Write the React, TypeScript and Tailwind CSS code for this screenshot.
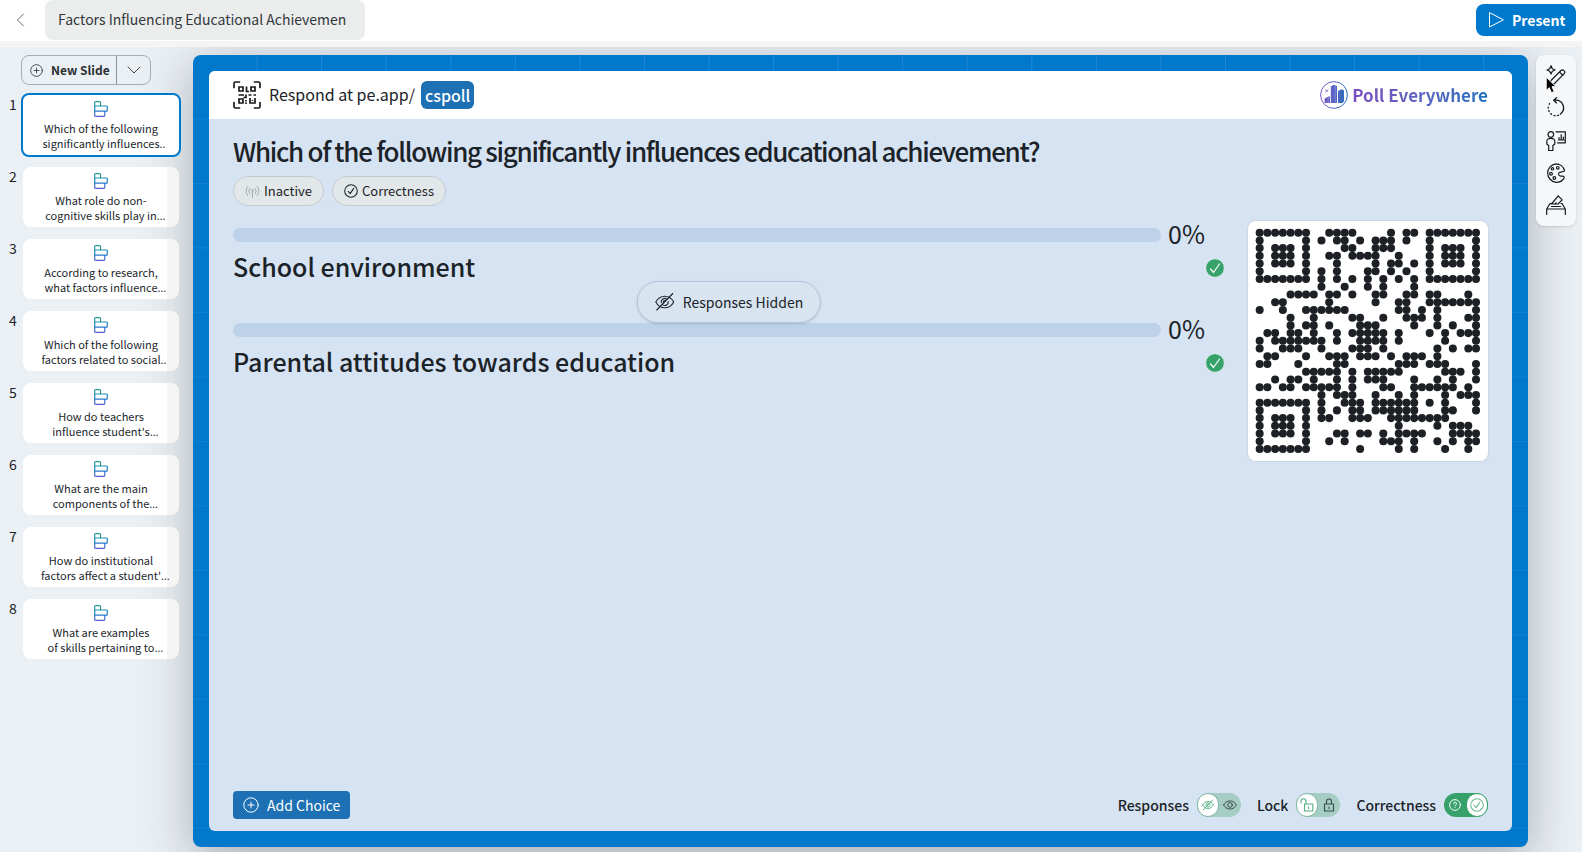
import type { ReactNode } from "react";

const QR_CELLS: string[] = [
  "0-6 9-12 17 19 20 22-28",
  "0 6 8 10 11 13 15-17 19 22 28",
  "0 2-4 6 11 12 15-17 22 24-26 28",
  "0 2-4 6 9 10 12-15 18 22 24-26 28",
  "0 2-4 6 10 15 17 18 20 22 24-26 28",
  "0 6 8 10 14 15 17 19 22 28",
  "0-6 8 10 12 14 16 18 20 22-28",
  "8 11 14 16 20",
  "4-7 9 10 12 15 16 19 20 22 23 27",
  "2 3 9 15 18 19 22-28",
  "0 3 6-11 18 19 21 23 28",
  "4 7 12 13 16 19-21 23 27 28",
  "4 6 7 9 13-15 20 23 25 28",
  "1 2 4 5 7 10 12-16 18 22 24 26-28",
  "0 2-8 10 13-16 18 24 28",
  "0 3-5 8 12-14 16 23 25 27 28",
  "1 2 6 9-11 13-15 17 19-21 23",
  "0 1 5 10 11 18-20 22-24 28",
  "6-10 12 14-18 24-26 28",
  "2 4 5 7 10 12 14-16 20 23 25 28",
  "0 1 3 4 6-10 12 16 17 20-25 27",
  "8 10-12 15 18 20 24 26-28",
  "0-6 8 11-13 15-20 22 24 28",
  "0 6 8 10 12 13 15-20 24 25 28",
  "0 2-4 6 8 9 12-14 17-24",
  "0 2-4 6 18 23 25-27",
  "0 2-4 6 10 11 13 14 16 18-21 25-28",
  "0 6 9 11 16-18 20 23 25 27 28",
  "0-6 13 18 20 24 27",
];

function expand(row: string): number[] {
  return row.split(" ").flatMap((part) => {
    const [from, to] = part.split("-").map(Number);
    if (to === undefined) return [from];
    return Array.from({ length: to - from + 1 }, (_, i) => from + i);
  });
}

type IconProps = { className?: string; box?: number; width?: number; children: ReactNode };

function Icon({ className = "size-5", box = 20, width = 1, children }: IconProps) {
  return (
    <svg
      className={className}
      viewBox={`0 0 ${box} ${box}`}
      fill="none"
      stroke="currentColor"
      strokeWidth={width}
      strokeLinecap="round"
      strokeLinejoin="round"
      aria-hidden="true"
    >
      {children}
    </svg>
  );
}

const PlusCircle = ({ className }: { className: string }) => (
  <Icon className={className} box={16}>
    <circle cx="8" cy="8" r="7.2" />
    <path d="M8 5v6M5 8h6" />
  </Icon>
);

const EyeOff = ({ className, width = 1.1 }: { className: string; width?: number }) => (
  <Icon className={className} width={width}>
    <path d="M1 10c2-3.6 5.2-5.8 9-5.8s7 2.2 9 5.8c-2 3.600-5.200 5.800-9 5.800S3 13.600 1 10Z" />
    <path d="M6.400 10.600A3.600 3.600 0 0 1 12 7.100M13.500 9.500A3.600 3.600 0 0 1 8 12.900M8.600 10.400a1.600 1.600 0 0 1 1.800-1.900" />
    <path d="M18 1.500 2 18" />
  </Icon>
);

const CheckCircle = ({ className, width = 1 }: { className: string; width?: number }) => (
  <Icon className={className} box={16} width={width}>
    <circle cx="8" cy="8" r="7.200" />
    <path d="m4.800 8.500 2.200 2.500L11.200 5" />
  </Icon>
);

function PollIcon() {
  return (
    <svg className="h-4 w-[14px]" viewBox="0 0 14 16" fill="none" strokeWidth="1.200" strokeLinejoin="round" aria-hidden="true">
      <defs>
        <linearGradient id="poll-stroke" x1="0" y1="0" x2="0" y2="16" gradientUnits="userSpaceOnUse">
          <stop offset="0" stopColor="#35a58c" />
          <stop offset="0.450" stopColor="#0f86c4" />
          <stop offset="1" stopColor="#5a5fd0" />
        </linearGradient>
      </defs>
      <path
        stroke="url(#poll-stroke)"
        d="M.7 14.500V1.400Q.7.700 1.400.7h4.400q.7 0 .7.700V5H12.600q.7 0 .7.700v3.800q0 .7-.7.700H.7M.7 5h5.800M10.800 10.200v4.100q0 1-1 1H1.400q-.7 0-.7-.8"
      />
    </svg>
  );
}

function ScanIcon() {
  return (
    <svg className="size-7 text-[#17191c]" viewBox="0 0 28 28" fill="none" stroke="currentColor" strokeWidth="1.700" aria-hidden="true">
      <path d="M1 6.500V2.500Q1 1 2.500 1H6.500M21.500 1h4Q27 1 27 2.500v4M27 21.500v4q0 1.500-1.500 1.500h-4M6.500 27h-4Q1 27 1 25.500v-4" strokeLinecap="round" />
      <path d="M6 6h4v4H6zM18 6h4v4h-4zM6 18h4v4H6z" />
      <path d="M13.500 5.500v5H16M5.500 14H11M13 13.500v3h-2.500M15.500 14h3M20.500 14H23M17 17v5h5v-5M19.500 19v1M13 19v1.500M13 21.500V23" />
    </svg>
  );
}

function BrandMark() {
  return (
    <svg className="size-7" viewBox="0 0 28 28" fill="none" aria-hidden="true">
      <defs>
        <linearGradient id="brand" x1="0" y1="0" x2="28" y2="0" gradientUnits="userSpaceOnUse">
          <stop offset="0" stopColor="#8058c4" />
          <stop offset="0.600" stopColor="#5266c4" />
          <stop offset="1" stopColor="#1d70b8" />
        </linearGradient>
      </defs>
      <circle cx="14" cy="14" r="13.400" stroke="url(#brand)" />
      <path
        fill="url(#brand)"
        d="M4.500 17.500 9 15.200l1 .6V22H4.500zM10.800 5.500 13.800 3.800l3.200 1.200V22h-6.200zM18 10l3.500-1.800 2.500 1v11L22.500 22H18z"
      />
      <path d="m8.300 15.500V22M15.300 5V21.500" stroke="#fff" strokeOpacity=".35" strokeWidth=".7" />
      <path d="M5 8.500l2.500 2M5.500 11.200l3-2.800" stroke="#7b52c0" strokeWidth=".8" />
    </svg>
  );
}

const slides: { lines: [string, string]; tail: string }[] = [
  { lines: ["Which of the following", "significantly influences"], tail: ".." },
  { lines: ["What role do non-", "cognitive skills play in"], tail: "…" },
  { lines: ["According to research,", "what factors influence"], tail: "…" },
  { lines: ["Which of the following", "factors related to social"], tail: ".." },
  { lines: ["How do teachers", "influence student's"], tail: "…" },
  { lines: ["What are the main", "components of the"], tail: "…" },
  { lines: ["How do institutional", "factors affect a student'"], tail: "…" },
  { lines: ["What are examples", "of skills pertaining to"], tail: "…" },
];

function SlideList() {
  return (
    <ol className="flex flex-col gap-2">
      {slides.map((slide, i) => (
        <li key={i} className="flex">
          <span className="w-[21px] shrink-0 pl-[9px] pt-px text-[14px] leading-5">{i + 1}</span>
          <button
            type="button"
            aria-current={i === 0}
            className={
              i === 0
                ? "flex h-16 w-40 flex-col items-center rounded-lg border-2 border-[#0078cc] bg-white pt-[6px]"
                : "flex h-16 w-40 flex-col items-center rounded-[10px] border-2 border-transparent bg-[linear-gradient(90deg,#fff_92%,#f5f5f5_92%)] bg-clip-padding pt-[6px]"
            }
          >
            <PollIcon />
            <span className="mt-1 text-[11px] leading-[15px] whitespace-nowrap text-[#22272c]">
              <span className="block">{slide.lines[0]}</span>
              <span className="block">
                {slide.lines[1]}
                <span className="inline-flex w-0 font-['Noto_Sans',sans-serif]">{slide.tail}</span>
              </span>
            </span>
          </button>
        </li>
      ))}
    </ol>
  );
}

function QrCode() {
  return (
    <svg
      className="size-60 shrink-0 rounded-lg bg-white shadow-[0_0_1px_1px_#c9d6e4]"
      viewBox="-1.010 -1.010 31.060 31.060"
      role="img"
      aria-label="QR code for pe.app/cspoll"
    >
      <g fill="#1d2024">
        {QR_CELLS.map((row, y) => expand(row).map((x) => <circle key={`${x}-${y}`} cx={x + 0.5} cy={y + 0.5} r="0.520" />))}
      </g>
    </svg>
  );
}

function Choice({ label }: { label: string }) {
  return (
    <li className="pb-[31px]">
      <div className="flex h-7 items-center">
        <div className="h-[14px] flex-1 rounded-full bg-[#bdd1e9]" />
        <span className="w-16 pb-1 pl-[7px] text-[25px] leading-7">0%</span>
      </div>
      <div className="flex h-9 items-center justify-between">
        <span className="pb-[2px] text-[25px] leading-9 font-medium">{label}</span>
        <svg className="mt-[2px] size-5" viewBox="0 0 20 20" fill="none" role="img" aria-label="Correct">
          <circle cx="10" cy="10" r="9.300" fill="#36a269" stroke="#e6f2ee" strokeWidth=".8" />
          <path d="m5.500 10.800 3 3.700 6-8.500" stroke="#fff" strokeWidth="1.200" strokeLinecap="round" strokeLinejoin="round" />
        </svg>
      </div>
    </li>
  );
}

type ToggleProps = { label: string; checked?: boolean; off: ReactNode; on: ReactNode };

function Toggle({ label, checked = false, off, on }: ToggleProps) {
  return (
    <label className="flex items-center gap-2 text-[14px] leading-6 font-medium">
      {label}
      <input type="checkbox" role="switch" defaultChecked={checked} className="peer sr-only" />
      <span
        className={
          checked
            ? "flex h-6 w-11 items-center justify-between rounded-full bg-[#36a269] text-white"
            : "flex h-6 w-11 items-center justify-between rounded-full bg-[#a5cdc3] text-[#3b4a4c]"
        }
      >
        <span
          className={
            checked
              ? "flex size-6 items-center justify-center"
              : "flex size-6 items-center justify-center rounded-full border border-[#7fb5a3] bg-white text-[#4fae80]"
          }
        >
          {off}
        </span>
        <span
          className={
            checked
              ? "flex size-6 items-center justify-center rounded-full border border-[#36a269] bg-white text-[#6cba94]"
              : "flex size-6 items-center justify-center"
          }
        >
          {on}
        </span>
      </span>
    </label>
  );
}

function SideTools() {
  const button = "flex h-8 w-full items-center justify-center";
  return (
    <aside className="relative ml-2 flex w-10 shrink-0 flex-col items-center self-start rounded-lg bg-[#f5f7f9] pt-1 pb-[5px] text-[#15181b] shadow-sm">
      <button type="button" aria-label="Edit with AI" className={button}>
        <Icon width={1.2}>
          <path d="M5 .8 6.300 3.700 9 5 6.300 6.300 5 9 3.700 6.300 1 5l2.700-1.300z" />
          <path d="m5 15.500 10-10q1.500-1.300 3 .2t.2 3L8 19l-4.500 1zM13.500 7l3.300 3.300" />
        </Icon>
      </button>
      <button type="button" aria-label="Reset" className={button}>
        <Icon width={1.300}>
          <path d="M8 3.200h1.500a7.700 7.700 0 0 1 5 13.800M10.500.8 7.700 3.300l2.800 2.600" />
          <path d="M12.500 18.200l-1 .4M9 18.700l-1-.1M5.500 17.300l-.8-.6M3.200 14.500l-.4-.8M2.200 11v-.8M3.200 7.200l.4-.6" />
        </Icon>
      </button>
      <button type="button" aria-label="Presenter view" className={button + " mt-[2px]"}>
        <Icon width={1.200}>
          <circle cx="4.800" cy="3.500" r="2.800" />
          <path d="M2.700 19.500V14.500L.8 13v-2.500q0-3.200 4-3.200t4 3.200V13l-1.900 1.500v5z" />
          <path d="M10 .8h9.300v11H11.500M12.500 9h5.500M13 9V6.500M15.200 9V3.500M17.300 9V6" />
        </Icon>
      </button>
      <button type="button" aria-label="Theme" className={button}>
        <Icon width={1.200}>
          <path d="M18.500 7.500C17.500 3.500 14 .8 10 .8A9.300 9.300 0 0 0 10 19.300c3.500 0 6.500-1.500 8-4.200.5-1-.3-2-1.500-2h-1.800c-2.500 0-3-3-.8-3.800l3.300-.8q1.500-.3 1.300-1Z" />
          <circle cx="6.500" cy="5.800" r="1.200" />
          <circle cx="11.800" cy="4.800" r="1.300" />
          <circle cx="5" cy="10.800" r="1.400" />
          <circle cx="8.300" cy="15" r="1.300" />
        </Icon>
      </button>
      <button type="button" aria-label="Voting" className={button}>
        <Icon width={1.200}>
          <path d="M.7 19.500V14h18.600v5.500M.7 14 4 8.500h2M19.300 14 16 8.500h-1M5.500 11.500h9" />
          <path d="m5.500 9 6.700-8.200 4 4L12 9H6.500zM9 9l1-1.200" />
        </Icon>
      </button>
      <svg className="absolute top-[21px] left-[9px] h-5 w-4" viewBox="0 0 16 20" aria-hidden="true">
        <path d="M1.200 1v13.500l3.100-2.800 2.200 5 2.700-1.200-2.200-4.800h4.200z" fill="#000" stroke="#fff" />
      </svg>
    </aside>
  );
}

export default function App() {
  return (
    <div className="flex min-h-screen flex-col overflow-hidden bg-[#ebf0f4] font-['Noto_Sans_CJK_SC','Noto_Sans',sans-serif] text-[#1b2228]">
      <header className="relative z-10 flex h-[47px] items-start justify-between border-b-[6px] border-[#f4f4f4] bg-white pr-[6px]">
        <div className="flex">
          <button type="button" aria-label="Back" className="flex h-10 w-[45px] items-center pl-[14px] text-[#666]">
            <Icon className="size-3.5" box={14}>
              <path d="M9.500 1 3.500 7l6 6" />
            </Icon>
          </button>
          <input
            aria-label="Presentation title"
            defaultValue="Factors Influencing Educational Achievemen"
            className="h-10 w-80 rounded-lg bg-[#ebecec] px-[13px] pb-[2px] text-[14px] text-[#33383c]"
          />
        </div>
        <button type="button" className="mt-1 flex h-8 w-[100px] items-center rounded-lg bg-[#0078cc] pl-3 text-[14px] leading-8 font-bold text-white">
          <Icon className="mr-2 size-4" box={16}>
            <path d="M1.500 1v14L15 8z" />
          </Icon>
          Present
        </button>
      </header>

      <div className="flex flex-1 pt-2 pr-[6px] pb-[5px]">
        <nav aria-label="Slides" className="relative w-[193px] shrink-0">
          <div className="mb-2 ml-[21px] flex h-[30px] w-[130px] rounded-lg border border-[#a9adb0]">
            <button type="button" className="flex flex-1 items-center gap-2 pl-2 text-[12px] leading-5 font-bold whitespace-nowrap text-[#2a2f34]">
              <PlusCircle className="size-[13px]" />
              New Slide
            </button>
            <button type="button" aria-label="More slide types" className="flex w-[34px] items-center justify-center border-l border-[#8d9194] text-[#444]">
              <Icon className="size-3.5" box={14}>
                <path d="m1 4 6 6 6-6" />
              </Icon>
            </button>
          </div>
          <SlideList />
        </nav>

        <main className="flex flex-1 rounded-lg bg-[#0078cc] bg-[linear-gradient(90deg,transparent_98%,#1f88d3_98%),linear-gradient(180deg,transparent_98%,#1280cf_98%)] bg-[length:4.837%_16px,100%_8.140%] [background-repeat:repeat-x,repeat-y] p-4 shadow-[0_12px_50px_rgba(40,50,60,0.35)]">
          <section className="flex flex-1 flex-col overflow-hidden rounded-md bg-[#d6e3f2]">
            <div className="flex h-12 items-center justify-between bg-white px-6">
              <div className="flex items-center gap-2 text-[16px] leading-7">
                <ScanIcon />
                <span className="pb-[2px]">Respond at pe.app/</span>
                <a href="#cspoll" className="-ml-[2px] rounded-md bg-[#1c70b3] px-1 font-medium text-white">
                  cspoll
                </a>
              </div>
              <div className="flex items-center gap-1">
                <BrandMark />
                <span className="bg-linear-to-r from-[#7b4fc0] to-[#1d72bd] bg-clip-text text-[17px] leading-7 font-bold text-transparent">
                  Poll Everywhere
                </span>
              </div>
            </div>

            <div className="flex flex-1 flex-col px-6 pt-[15px] pb-3">
              <h1 className="text-[26px] leading-[34px] font-medium tracking-tighter">
                Which of the following significantly influences educational achievement?
              </h1>
              <div className="mt-2 flex gap-2 text-[13px] leading-7">
                <span className="flex items-center gap-1 rounded-full border border-[#c6cbd0] bg-[#e2e7ea] px-[11px]">
                  <Icon className="size-[15px] text-[#a3a8ac]" box={16}>
                    <path d="M3 2.500a7.500 7.500 0 0 0 0 10M5.200 4.500a4.500 4.500 0 0 0 0 6M13 2.500a7.500 7.500 0 0 1 0 10M10.800 4.500a4.500 4.500 0 0 1 0 6M8 8v6.500" />
                    <circle cx="8" cy="7" r="1.100" />
                  </Icon>
                  Inactive
                </span>
                <span className="flex items-center gap-1 rounded-full border border-[#c6cbd0] bg-[#e2e7ea] px-[11px]">
                  <CheckCircle className="size-[14px]" width={1.200} />
                  Correctness
                </span>
              </div>

              <div className="mt-[15px] flex items-start gap-[23px]">
                <div className="relative flex-1">
                  <ul>
                    <Choice label="School environment" />
                    <Choice label="Parental attitudes towards education" />
                  </ul>
                  <div className="absolute top-[60px] left-1/2 flex h-[42px] -translate-x-1/2 items-center gap-2 rounded-full border border-[#b3c7da] bg-[#d8e4f0] px-[17px] text-[14px] whitespace-nowrap shadow-sm">
                    <EyeOff className="size-5" />
                    Responses Hidden
                  </div>
                </div>
                <QrCode />
              </div>

              <div className="mt-auto flex items-center justify-between">
                <button type="button" className="flex h-7 items-center gap-2 rounded bg-[#1c70b3] px-[10px] text-[14px] text-white">
                  <PlusCircle className="size-4" />
                  Add Choice
                </button>
                <div className="flex gap-4">
                  <Toggle
                    label="Responses"
                    off={<EyeOff className="size-3" width={1.500} />}
                    on={
                      <Icon className="size-3.5" width={1.400}>
                        <path d="M1 10c2-3.600 5.200-5.800 9-5.800s7 2.200 9 5.800c-2 3.600-5.200 5.800-9 5.800S3 13.600 1 10Z" />
                        <circle cx="10" cy="10" r="3.300" />
                      </Icon>
                    }
                  />
                  <Toggle
                    label="Lock"
                    off={
                      <Icon className="size-3.5" box={14} width={1.100}>
                        <path d="M4.500 6h8.300v7H4.500zM1 5V3.300a2.400 2.400 0 0 1 5 0V6M8.600 9v1.500" />
                      </Icon>
                    }
                    on={
                      <Icon className="size-3.5" box={14} width={1.100}>
                        <path d="M2.500 6h9v7h-9zM4.500 6V3.500a2.500 2.500 0 0 1 5 0V6M7 9v1.500" />
                      </Icon>
                    }
                  />
                  <Toggle
                    label="Correctness"
                    checked
                    off={
                      <Icon className="size-3" box={16} width={1.300}>
                        <circle cx="8" cy="8" r="7.200" />
                        <path d="M6 6.200a2 2 0 1 1 3 1.700q-1 .5-1 1.500M8 11.500v.2" />
                      </Icon>
                    }
                    on={<CheckCircle className="size-3.5" width={1.200} />}
                  />
                </div>
              </div>
            </div>
          </section>
        </main>

        <SideTools />
      </div>
    </div>
  );
}
